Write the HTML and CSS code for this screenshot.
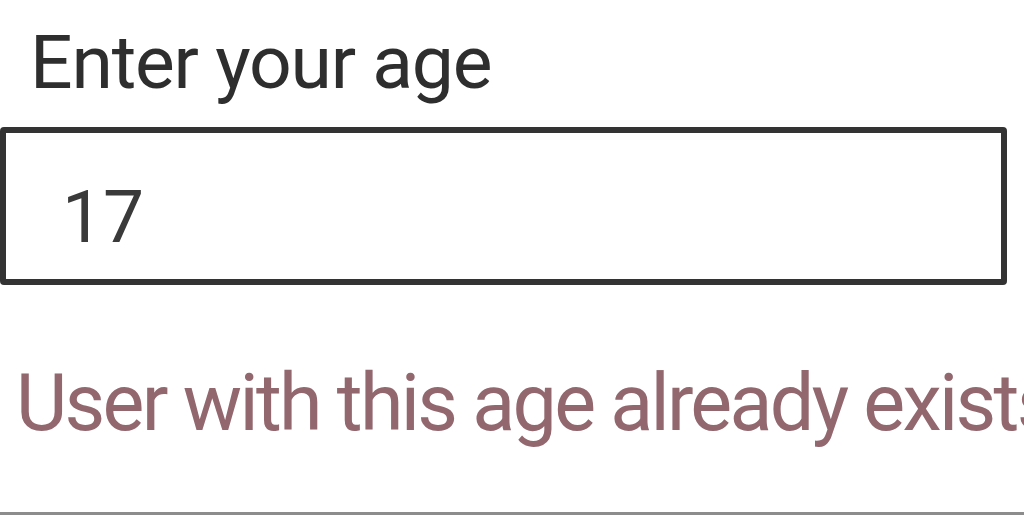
FILE: index.html
```html
<!DOCTYPE html>
<html>
<head>
<meta charset="utf-8">
<link rel="stylesheet" href="styles.css">
</head>
<body>
<div class="page">
  <div class="field">
    <label class="label" for="age">Enter your age</label>
    <input class="input" id="age" type="text" value="17">
    <div class="error">User with this age already exists</div>
  </div>
  <div class="bottom-line"></div>
</div>
</body>
</html>
```
FILE: styles.css
```css
html, body {
  margin: 0;
  padding: 0;
  background: #ffffff;
}
.page {
  width: 1024px;
  height: 515px;
  overflow: hidden;
  display: flex;
  flex-direction: column;
  font-family: Roboto, "Noto Sans", sans-serif;
}
.field {
  flex: 1;
  display: flex;
  flex-direction: column;
  white-space: nowrap;
}
.label {
  display: block;
  margin: 25px 0 0 30px;
  font-size: 75px;
  line-height: 75px;
  height: 102px;
  color: #2e2e2e;
  letter-spacing: -1.2px;
}
.input {
  box-sizing: border-box;
  width: 1007px;
  height: 158px;
  margin: 0;
  border: 6px solid #333333;
  border-radius: 4px;
  padding: 22px 0 0 56px;
  font-family: Roboto, "Noto Sans", sans-serif;
  font-size: 73px;
  color: #3a3a3a;
  background: #ffffff;
  outline: none;
}
.error {
  margin: 78px 0 0 16px;
  font-size: 79px;
  line-height: 80px;
  color: #93676e;
  letter-spacing: -2.7px;
}
.bottom-line {
  height: 3px;
  background: #8c8c8c;
}
```
